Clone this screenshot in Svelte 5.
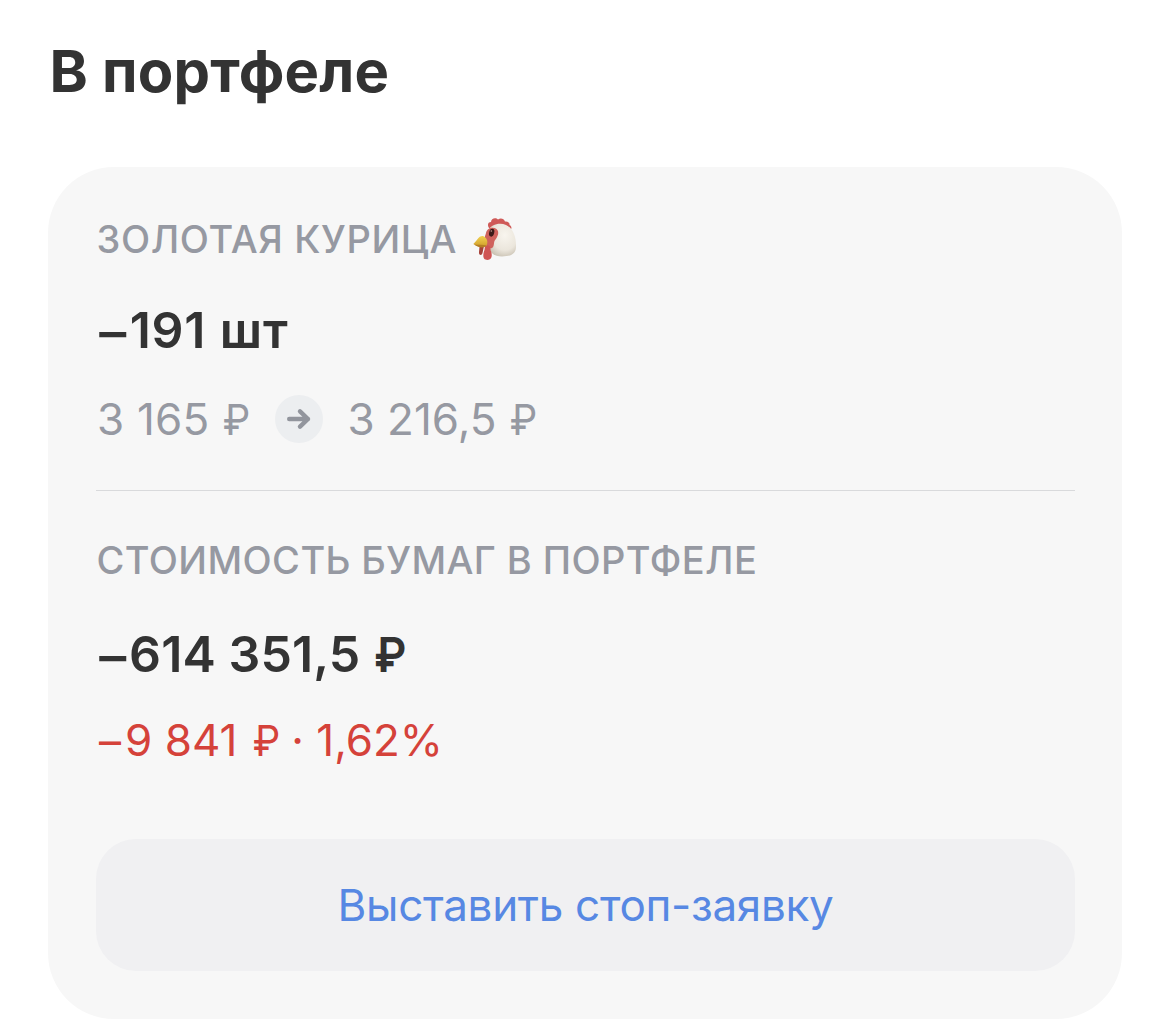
<script>
  const position = {
    name: 'ЗОЛОТАЯ КУРИЦА',
    quantity: '191 шт',
    from: '3 165',
    to: '3 216,5',
    total: '614 351,5',
    change: '9 841',
    percent: '· 1,62%'
  };
</script>

<main>
  <h1>В портфеле</h1>
  <section class="card">
    <div class="holding">
      <div class="label">
        <span class="name">{position.name}</span>
        <svg class="chicken" viewBox="0 0 44 44" aria-hidden="true">
          <defs>
            <radialGradient id="head" cx="0.6" cy="0.35" r="0.7">
              <stop offset="0" stop-color="#f8f5ee" />
              <stop offset="0.65" stop-color="#ebe6dc" />
              <stop offset="1" stop-color="#c9c1b2" />
            </radialGradient>
            <linearGradient id="beak" x1="0" y1="0" x2="0" y2="1">
              <stop offset="0" stop-color="#f2d24f" />
              <stop offset="1" stop-color="#cf9d2b" />
            </linearGradient>
          </defs>
          <path d="M16 11C14 8 15 5 18 5C18 1 23 0 25 2.500C28 .5 31 2 32 4.500C35 4 37 6 36.500 8C39 9 39 12 37 13L17 12Z" fill="#cf5a58" />
          <path d="M15 14C18 7 27 5.500 33 8C40 11 43 20 43 28C43.500 36 39 39.500 29 39.500C21 39.500 17 36 16 30Z" fill="url(#head)" />
          <path d="M13 16C14 11 20 9.500 23.500 12C27 15 24.500 20 22.500 22.500C20 25 22 29 19 31C16 32 13 30 12 26C10 23 12 20 13 16Z" fill="#cf625c" />
          <path d="M12 29C15 27 18 29 17.500 33C19.500 37 19.500 43 14.500 43C9 43 10 37 11.500 33Z" fill="#cf5453" />
          <path d="M6.500 30L11 29L9.500 36C9 39 5.500 38.500 6 35Z" fill="#a7423a" />
          <path d="M.3 27C4 24 5.500 18.500 10 19C14 20.500 15.500 25 13.500 28.500C11 31 5 30 .3 27Z" fill="url(#beak)" />
          <path d="M1 27.500C6 28 10 27.500 13.500 28.500C11 31.500 6 31 1 27.500Z" fill="#b57e25" />
          <ellipse cx="18.700" cy="15.700" rx="2.500" ry="4" fill="#3b1b18" transform="rotate(15 18.700 15.700)" />
          <circle cx="18.300" cy="14" r=".8" fill="#c79e96" />
        </svg>
      </div>
      <div class="value qty"><span class="sign">–</span><span>{position.quantity}</span></div>
      <div class="detail prices">
        <span class="from">{position.from}<span class="ruble">₽</span></span>
        <span class="arrow">
          <svg viewBox="0 0 48 48" aria-hidden="true">
            <path d="M14.200 24H33M25 16.300L33 24L25 31.700" fill="none" stroke="#92959d" stroke-width="4.400" stroke-linecap="round" stroke-linejoin="round" />
          </svg>
        </span>
        <span class="to">{position.to}<span class="ruble">₽</span></span>
      </div>
    </div>
    <div class="worth">
      <div class="label"><span class="caption">СТОИМОСТЬ БУМАГ В ПОРТФЕЛЕ</span></div>
      <div class="value total"><span class="sign">–</span><span>{position.total}</span><span class="ruble">₽</span></div>
      <div class="detail loss"><span class="sign">–</span><span>{position.change}</span><span class="ruble">₽</span><span class="percent">{position.percent}</span></div>
    </div>
    <button type="button">Выставить стоп-заявку</button>
  </section>
</main>

<style>
  :global(body) {
    background: #fff;
  }
  main {
    box-sizing: border-box;
    width: 1170px;
    height: 1032px;
    padding: 36px 48px 14px;
    font-family: Inter, 'Liberation Sans', sans-serif;
    color: #333;
    white-space: nowrap;
  }
  h1 {
    margin: 0 0 61px;
    padding-left: 1.5px;
    font-size: 58px;
    line-height: 70px;
    font-weight: 700;
    letter-spacing: 0.2px;
  }
  .card {
    box-sizing: border-box;
    width: 1074px;
    height: 852px;
    padding: 48px 47px 48px 48px;
    border-radius: 66px;
    background: #f7f7f7;
  }
  .holding {
    box-sizing: border-box;
    height: 276px;
    border-bottom: 1px solid #d9dadc;
  }
  .worth {
    box-sizing: border-box;
    height: 348px;
    padding-top: 45px;
  }
  .label {
    display: flex;
    align-items: center;
    height: 48px;
    padding-left: 0.5px;
    font-size: 38px;
    line-height: 48px;
    font-weight: 500;
    color: #9699a2;
  }
  .name {
    letter-spacing: 0.65px;
  }
  .caption {
    letter-spacing: 0.4px;
  }
  .chicken {
    width: 44px;
    height: 44px;
    margin-left: 16px;
    overflow: visible;
  }
  .value,
  .detail {
    display: flex;
    align-items: center;
  }
  .value {
    height: 60px;
    margin-top: 37px;
    font-size: 50px;
    line-height: 60px;
    font-weight: 600;
  }
  .qty {
    word-spacing: 0.5px;
    letter-spacing: 0.7px;
  }
  .value .sign {
    margin-right: 4px;
    padding: 3px 0 0 4px;
    transform: scaleX(1.08);
  }
  .total {
    margin-top: 40px;
    letter-spacing: 0.1px;
  }
  .detail {
    height: 54px;
    font-size: 44px;
    line-height: 54px;
    color: #9699a2;
  }
  .ruble {
    display: inline-block;
    margin-left: 12px;
    transform: scale(0.89, 0.96);
    transform-origin: 50% 78%;
  }
  .value .ruble {
    margin-left: 12px;
  }
  .prices {
    margin-top: 32px;
  }
  .from {
    padding-left: 1px;
    letter-spacing: 0.2px;
  }
  .arrow {
    width: 48px;
    height: 48px;
    margin: 0 25px 0 22px;
    border-radius: 50%;
    background: #eceef0;
  }
  .arrow svg {
    display: block;
  }
  .loss {
    margin-top: 29px;
    color: #d5423a;
  }
  .detail .sign {
    margin-right: 4px;
    padding: 2px 0 0 3px;
  }
  .loss .ruble {
    margin-left: 14px;
  }
  .percent {
    margin-left: 9px;
  }
  button {
    display: flex;
    align-items: center;
    justify-content: center;
    width: 979px;
    height: 132px;
    padding: 0;
    border: 0;
    border-radius: 40px;
    background: #f0f0f2;
    color: #5788e3;
    font: 400 44px/54px Inter, 'Liberation Sans', sans-serif;
    letter-spacing: -0.3px;
  }
</style>
